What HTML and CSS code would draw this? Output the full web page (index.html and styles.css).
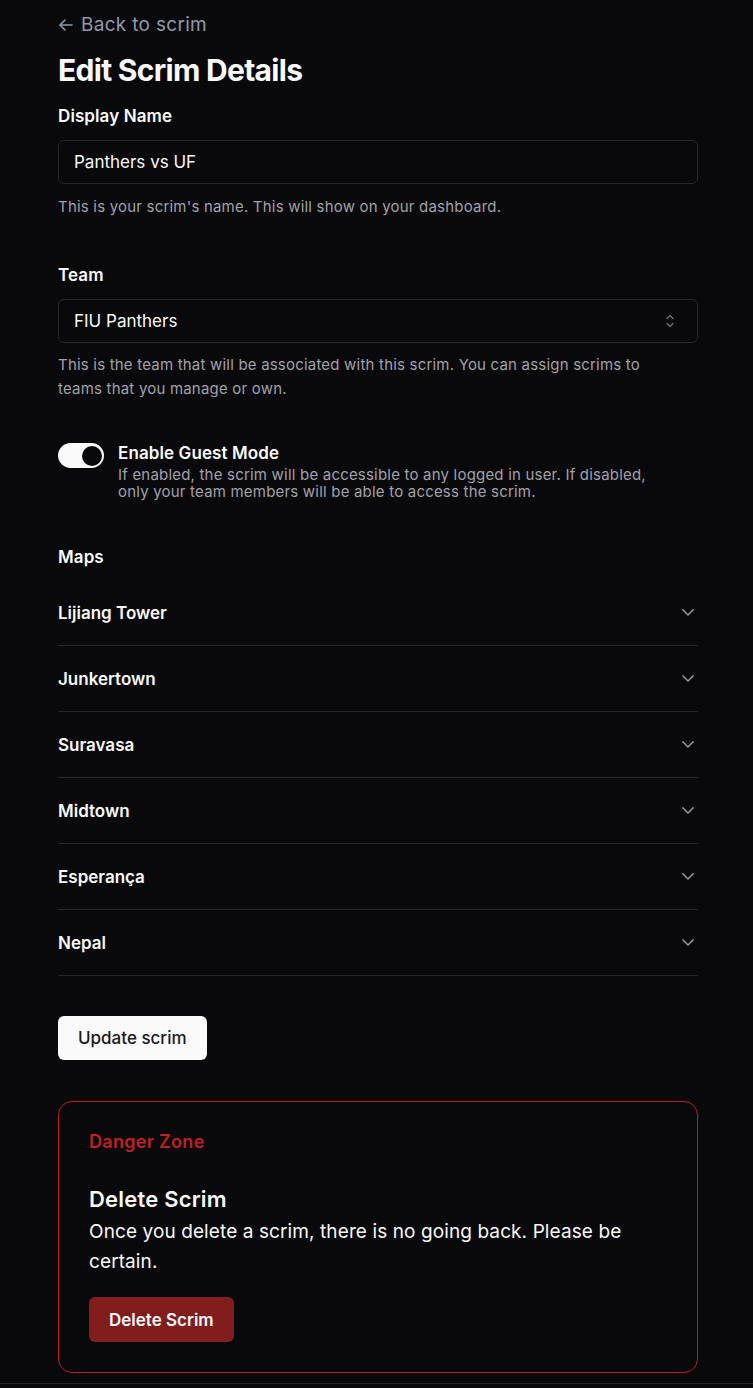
FILE: index.html
```html
<!DOCTYPE html>
<html lang="en">
<head>
<meta charset="utf-8">
<title>Edit Scrim Details</title>
<link rel="stylesheet" href="styles.css">
</head>
<body>
<main class="page">
  <a class="back" href="#"><svg class="back-icon" viewBox="0 0 14 12" width="14" height="12" fill="none" stroke="currentColor" stroke-width="1.6" stroke-linecap="round" stroke-linejoin="round"><path d="M13 6H1.2"/><path d="M6 1L1 6l5 5"/></svg>Back to scrim</a>
  <h1 class="title">Edit Scrim Details</h1>

  <div class="field">
    <label class="label">Display Name</label>
    <div class="input">Panthers vs UF</div>
    <p class="desc">This is your scrim's name. This will show on your dashboard.</p>
  </div>

  <div class="field field-team">
    <label class="label">Team</label>
    <div class="input select">
      <span>FIU Panthers</span>
      <svg class="updown" viewBox="0 0 8 14" width="8" height="14" fill="none" stroke="currentColor" stroke-width="1.3" stroke-linecap="round" stroke-linejoin="round"><path d="M1 4.5L4 1.5l3 3"/><path d="M1 9.5l3 3 3-3"/></svg>
    </div>
    <p class="desc desc-tall">This is the team that will be associated with this scrim. You can assign scrims to teams that you manage or own.</p>
  </div>

  <div class="switch-row">
    <div class="switch"><span class="thumb"></span></div>
    <div class="switch-text">
      <div class="switch-label">Enable Guest Mode</div>
      <p class="switch-desc">If enabled, the scrim will be accessible to any logged in user. If disabled, only your team members will be able to access the scrim.</p>
    </div>
  </div>

  <div class="maps">
    <div class="label maps-label">Maps</div>
    <div class="acc">Lijiang Tower<svg class="chev" viewBox="0 0 12 7" width="12" height="7" fill="none" stroke="currentColor" stroke-width="1.3" stroke-linecap="round" stroke-linejoin="round"><path d="M0.8 0.8L6 6l5.2-5.2"/></svg></div>
    <div class="acc">Junkertown<svg class="chev" viewBox="0 0 12 7" width="12" height="7" fill="none" stroke="currentColor" stroke-width="1.3" stroke-linecap="round" stroke-linejoin="round"><path d="M0.8 0.8L6 6l5.2-5.2"/></svg></div>
    <div class="acc">Suravasa<svg class="chev" viewBox="0 0 12 7" width="12" height="7" fill="none" stroke="currentColor" stroke-width="1.3" stroke-linecap="round" stroke-linejoin="round"><path d="M0.8 0.8L6 6l5.2-5.2"/></svg></div>
    <div class="acc">Midtown<svg class="chev" viewBox="0 0 12 7" width="12" height="7" fill="none" stroke="currentColor" stroke-width="1.3" stroke-linecap="round" stroke-linejoin="round"><path d="M0.8 0.8L6 6l5.2-5.2"/></svg></div>
    <div class="acc">Esperança<svg class="chev" viewBox="0 0 12 7" width="12" height="7" fill="none" stroke="currentColor" stroke-width="1.3" stroke-linecap="round" stroke-linejoin="round"><path d="M0.8 0.8L6 6l5.2-5.2"/></svg></div>
    <div class="acc">Nepal<svg class="chev" viewBox="0 0 12 7" width="12" height="7" fill="none" stroke="currentColor" stroke-width="1.3" stroke-linecap="round" stroke-linejoin="round"><path d="M0.8 0.8L6 6l5.2-5.2"/></svg></div>
  </div>

  <button class="btn-update">Update scrim</button>

  <section class="danger">
    <h2 class="danger-title">Danger Zone</h2>
    <h3 class="danger-head">Delete Scrim</h3>
    <p class="danger-text">Once you delete a scrim, there is no going back. Please be certain.</p>
    <button class="btn-delete">Delete Scrim</button>
  </section>
</main>
<footer class="footer"></footer>
</body>
</html>
```

FILE: styles.css
```css
* { box-sizing: border-box; }
html, body { margin: 0; padding: 0; }
body {
  background: #09090b;
  color: #fafafa;
  font-family: Inter, "Liberation Sans", sans-serif;
}
.page {
  width: 640px;
  margin-left: 58px;
  padding-top: 13px;
  height: 1383px;
  overflow: hidden;
}
.back {
  display: flex;
  align-items: center;
  gap: 8px;
  color: #8e9aab;
  text-decoration: none;
  font-size: 19px;
  line-height: 24px;
  letter-spacing: 0.3px;
}
.back-icon { margin-left: 1px; }
.title {
  margin: 13px 0 0;
  font-size: 30px;
  line-height: 40px;
  font-weight: 700;
  letter-spacing: -0.7px;
}
.field { margin-top: 16px; }
.label {
  display: block;
  font-size: 17px;
  font-weight: 600;
  line-height: 20px;
  letter-spacing: 0.1px;
}
.input {
  margin-top: 14px;
  height: 44px;
  border: 1px solid #27272a;
  border-radius: 6px;
  padding: 0 15px;
  display: flex;
  align-items: center;
  font-size: 17px;
}
.select { justify-content: space-between; }
.updown { color: #71717a; margin-right: 8px; }
.desc {
  margin: 13px 0 0;
  font-size: 15px;
  line-height: 20px;
  color: #a1a1aa;
  letter-spacing: 0.2px;
}
.desc-tall { line-height: 24px; margin-top: 10px; max-width: 610px; }
.field-team { margin-top: 48px; }
.switch-row {
  margin-top: 42px;
  display: flex;
  gap: 14px;
  align-items: flex-start;
}
.switch {
  flex: none;
  width: 46px;
  height: 25px;
  border-radius: 13px;
  background: #fafafa;
  padding: 2.5px;
  display: flex;
  justify-content: flex-end;
}
.thumb {
  width: 20px;
  height: 20px;
  border-radius: 50%;
  background: #09090b;
}
.switch-text { max-width: 545px; }
.switch-label {
  font-size: 17px;
  font-weight: 600;
  line-height: 20px;
  letter-spacing: 0.1px;
}
.switch-desc {
  margin: 3px 0 0;
  font-size: 15px;
  line-height: 17px;
  color: #a1a1aa;
  letter-spacing: 0.2px;
}
.maps { margin-top: 47px; }
.maps-label { margin-bottom: 13px; }
.acc {
  height: 66px;
  border-bottom: 1px solid #27272a;
  display: flex;
  align-items: center;
  justify-content: space-between;
  font-size: 17px;
  font-weight: 600;
}
.chev { color: #a1a1aa; margin-right: 4px; }
.btn-update {
  display: block;
  margin-top: 40px;
  height: 44px;
  padding: 0 20px;
  background: #fafafa;
  color: #18181b;
  border: none;
  border-radius: 6px;
  font-family: inherit;
  font-size: 17px;
  font-weight: 500;
}
.danger {
  margin-top: 41px;
  border: 1px solid #b91c1c;
  border-radius: 14px;
  padding: 27px 30px 30px;
}
.danger-title {
  margin: 0;
  color: #c0201f;
  font-size: 18px;
  line-height: 26px;
  font-weight: 600;
  letter-spacing: 0.3px;
}
.danger-head {
  margin: 30px 0 0;
  font-size: 22px;
  line-height: 28px;
  font-weight: 600;
  letter-spacing: 0.2px;
}
.danger-text {
  margin: 4px 0 0;
  font-size: 19px;
  line-height: 30px;
  letter-spacing: 0.1px;
}
.btn-delete {
  display: block;
  margin-top: 20px;
  height: 45px;
  padding: 0 20px;
  background: #821d1d;
  color: #fafafa;
  border: none;
  border-radius: 6px;
  font-family: inherit;
  font-size: 17px;
  font-weight: 600;
}
.footer {
  border-top: 1px solid #27272a;
  height: 5px;
}
```
